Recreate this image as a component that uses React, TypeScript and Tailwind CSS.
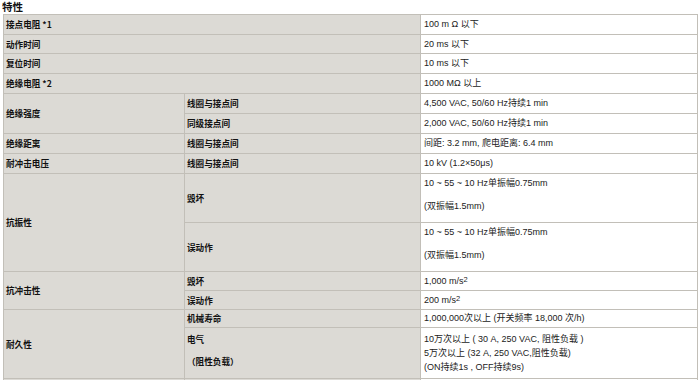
import React from "react";

const lab = "bg-[#dcdad5] flex items-center pl-[2px] font-bold text-[8.6px] text-[#111]";
const val = "bg-white flex items-center pl-[3px] text-[9px] text-[#222]";
const valFont = { fontFamily: '"Liberation Sans", "Noto Sans CJK SC", sans-serif' };

export default function App() {
  return (
    <div className="w-[700px] h-[380px] overflow-hidden bg-white" style={{ fontFamily: '"Noto Sans CJK SC", sans-serif' }}>
      <div className="h-[14px] pl-[2px] text-[10.5px] font-bold leading-[14px] text-[#111]">特性</div>
      <div
        className="ml-[3px] grid w-[695px] gap-[1px] bg-[#c2bfb8] p-[1px] grid-cols-[180px_235px_276px] grid-rows-[19px_18px_19px_19px_19px_19px_19px_19px_48px_48px_18px_18px_17px_50px_20px] leading-none"
      >
        <div className={`${lab} col-span-2`}>接点电阻 *1</div>
        <div className={val} style={valFont}>100 m Ω 以下</div>
        <div className={`${lab} col-span-2`}>动作时间</div>
        <div className={val} style={valFont}>20 ms 以下</div>
        <div className={`${lab} col-span-2`}>复位时间</div>
        <div className={val} style={valFont}>10 ms 以下</div>
        <div className={`${lab} col-span-2`}>绝缘电阻 *2</div>
        <div className={val} style={valFont}>1000 MΩ 以上</div>

        <div className={`${lab} row-span-2`}>绝缘强度</div>
        <div className={lab}>线圈与接点间</div>
        <div className={val} style={valFont}>4,500 VAC, 50/60 Hz持续1 min</div>
        <div className={lab}>同级接点间</div>
        <div className={val} style={valFont}>2,000 VAC, 50/60 Hz持续1 min</div>

        <div className={lab}>绝缘距离</div>
        <div className={lab}>线圈与接点间</div>
        <div className={val} style={valFont}>间距: 3.2 mm, 爬电距离: 6.4 mm</div>

        <div className={lab}>耐冲击电压</div>
        <div className={lab}>线圈与接点间</div>
        <div className={val} style={valFont}>10 kV (1.2×50μs)</div>

        <div className={`${lab} row-span-2`}>抗振性</div>
        <div className={lab}>毁坏</div>
        <div className="bg-white flex flex-col pl-[3px] pt-[2px] gap-[9px] text-[9px] text-[#222]" style={valFont}>
          <span className="leading-[14px]">10 ~ 55 ~ 10 Hz单振幅0.75mm</span>
          <span className="leading-[14px]">(双振幅1.5mm)</span>
        </div>
        <div className={lab}>误动作</div>
        <div className="bg-white flex flex-col pl-[3px] pt-[2px] gap-[9px] text-[9px] text-[#222]" style={valFont}>
          <span className="leading-[14px]">10 ~ 55 ~ 10 Hz单振幅0.75mm</span>
          <span className="leading-[14px]">(双振幅1.5mm)</span>
        </div>

        <div className={`${lab} row-span-2`}>抗冲击性</div>
        <div className={lab}>毁坏</div>
        <div className={val} style={valFont}>
          <span>1,000 m/s<sup className="text-[7.5px] relative top-[-2px]">2</sup></span>
        </div>
        <div className={lab}>误动作</div>
        <div className={val} style={valFont}>
          <span>200 m/s<sup className="text-[7.5px] relative top-[-2px]">2</sup></span>
        </div>

        <div className={`${lab} row-span-2`}>耐久性</div>
        <div className={lab}>机械寿命</div>
        <div className={val} style={valFont}>1,000,000次以上 (开关频率 18,000 次/h)</div>
        <div className="bg-[#dcdad5] flex flex-col justify-center pl-[2px] pb-[5px] gap-[9px] font-bold text-[8.6px] text-[#111]">
          <span className="leading-[13px]">电气</span>
          <span className="leading-[13px]">（阻性负载）</span>
        </div>
        <div className="bg-white flex flex-col justify-center pl-[3px] text-[9px] text-[#222]" style={valFont}>
          <span className="leading-[14px]">10万次以上 ( 30 A, 250 VAC, 阻性负载 )</span>
          <span className="leading-[14px]">5万次以上 (32 A, 250 VAC,阻性负载)</span>
          <span className="leading-[14px]">(ON持续1s , OFF持续9s)</span>
        </div>

        <div className={lab}></div>
        <div className={lab}></div>
        <div className={val}></div>
      </div>
    </div>
  );
}
